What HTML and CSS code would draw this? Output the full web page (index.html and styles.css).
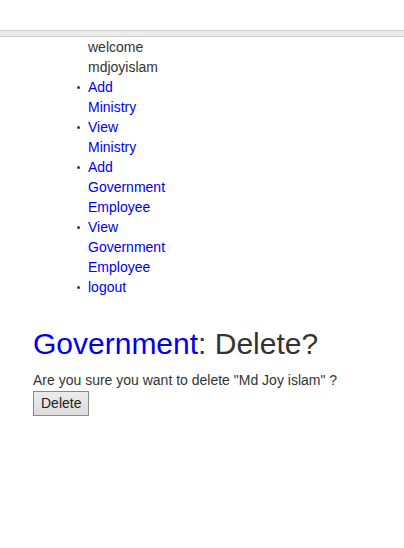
FILE: index.html
```html
<!DOCTYPE html>
<html>
<head>
<meta charset="utf-8">
<link rel="stylesheet" href="styles.css">
</head>
<body>
<div class="navbar"></div>
<div class="side">
  <div class="user">welcome</div>
  <div class="user">mdjoyislam</div>
  <ul class="menu">
    <li><a href="#">Add Ministry</a></li>
    <li><a href="#">View Ministry</a></li>
    <li><a href="#">Add Government Employee</a></li>
    <li><a href="#">View Government Employee</a></li>
    <li><a href="#">logout</a></li>
  </ul>
</div>
<div class="content">
  <h2 class="title"><a href="#">Government</a>: Delete?</h2>
  <div class="question">Are you sure you want to delete "Md Joy islam" ?</div>
  <form class="form">
    <button type="button" class="btn">Delete</button>
  </form>
</div>
</body>
</html>
```
FILE: styles.css
```css
html, body {
  margin: 0;
  padding: 0;
  background: #fff;
}
body {
  font-family: "Liberation Sans", Arial, sans-serif;
  font-size: 14px;
  line-height: 20px;
  color: #333;
}
a {
  color: #0000ee;
  text-decoration: none;
}
.navbar {
  margin-top: 30px;
  height: 5px;
  background: #ececec;
  border-top: 1px solid #cfcfcf;
  border-bottom: 1px solid #cfcfcf;
}
.side {
  margin-left: 88px;
  width: min-content;
}
.menu {
  margin: 0 0 10px;
  padding: 0;
  list-style: none;
}
.menu li {
  position: relative;
  width: min-content;
}
.menu li::before {
  content: "";
  position: absolute;
  left: -11px;
  top: 9px;
  width: 3px;
  height: 3px;
  border-radius: 50%;
  background: #3a3a3a;
}
.content {
  padding-left: 33px;
}
.title {
  margin: 30px 0 10px;
  font-size: 30px;
  line-height: 33px;
  font-weight: 400;
  color: #333;
}
.question {
  margin: 0;
}
.form {
  margin: 1px 0 0;
}
.btn {
  font-family: "Liberation Sans", Arial, sans-serif;
  font-size: 14px;
  line-height: 17px;
  color: #222;
  padding: 3px 7px;
  width: 56px;
  background: linear-gradient(#ececec, #dcdcdc);
  border: 1px solid #8a8a8a;
  border-radius: 0;
  margin: 0;
}
```
